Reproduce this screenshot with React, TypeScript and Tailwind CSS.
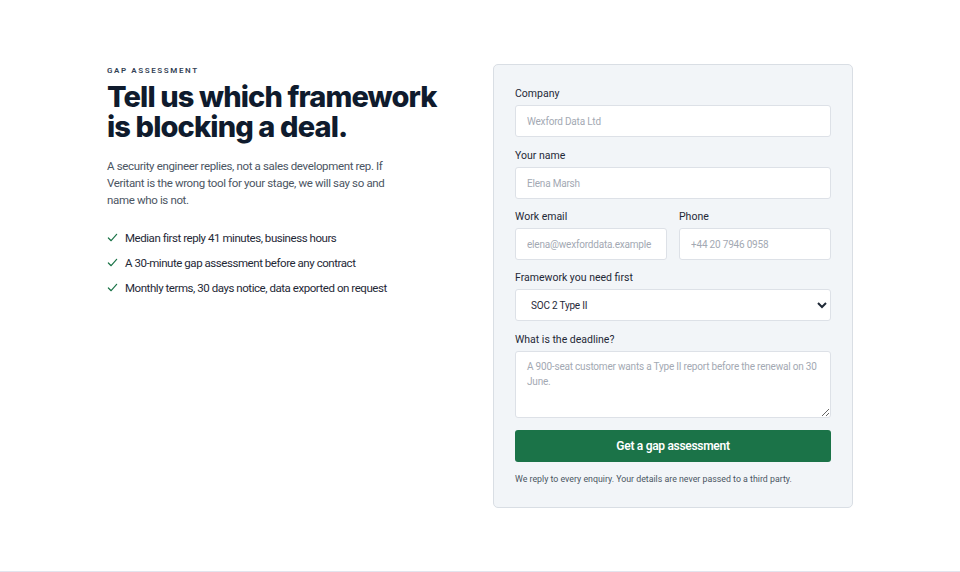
import React from "react";

const body = { fontFamily: 'Roboto, "Noto Sans", sans-serif' };

const points = [
  "Median first reply 41 minutes, business hours",
  "A 30-minute gap assessment before any contract",
  "Monthly terms, 30 days notice, data exported on request",
];

function Check() {
  return (
    <svg viewBox="0 0 12 12" className="mt-[2px] h-[11px] w-[11px] shrink-0 text-[#1b7348]" fill="none" stroke="currentColor" strokeWidth="1.3" strokeLinecap="round" strokeLinejoin="round">
      <path d="M1.5 6.5l3 3 6-7" />
    </svg>
  );
}

function Label({ children }: { children: React.ReactNode }) {
  return <label className="mb-[4px] block text-[10.5px] leading-[14px] text-[#1f2937]">{children}</label>;
}

const field =
  "block w-full h-[32px] rounded-[3px] border border-[#dde1e7] bg-white px-[11px] text-[10px] tracking-[-0.2px] text-[#1f2937] placeholder:text-[#a3a9b3] outline-none";

export default function App() {
  return (
    <div className="h-[572px] w-full overflow-hidden border-b border-[#e3e4ee] bg-white" style={body}>
      <div className="mx-auto flex w-[746px] justify-between pt-[64px]">
        <div className="w-[350px] pt-[2px]">
          <p className="text-[8px] font-semibold uppercase leading-[10px] tracking-[0.2em] text-[#334155]">
            Gap assessment
          </p>
          <h1
            className="mt-[6px] text-[29px] font-extrabold leading-[30px] tracking-[-0.03em] text-[#0f1b2d]"
            style={{ fontFamily: "Inter, sans-serif" }}
          >
            Tell us which framework
            <br />
            is blocking a deal.
          </h1>
          <p className="mt-[16px] w-[290px] text-[11.5px] leading-[17px] tracking-[-0.35px] text-[#4b5563]">
            A security engineer replies, not a sales development rep. If Veritant is the wrong tool for your stage, we will
            say so and name who is not.
          </p>
          <ul className="mt-[21px] flex flex-col gap-[8px]">
            {points.map((p) => (
              <li key={p} className="flex gap-[7px] text-[11.5px] leading-[17px] tracking-[-0.45px] text-[#1f2937]">
                <Check />
                {p}
              </li>
            ))}
          </ul>
        </div>

        <form className="w-[360px] self-start rounded-[5px] border border-[#d9dee4] bg-[#f2f5f8] px-[21px] pt-[22px] pb-[22px]">
          <Label>Company</Label>
          <input className={field} placeholder="Wexford Data Ltd" />
          <div className="mt-[12px]">
            <Label>Your name</Label>
            <input className={field} placeholder="Elena Marsh" />
          </div>
          <div className="mt-[11px] grid grid-cols-2 gap-[12px]">
            <div>
              <Label>Work email</Label>
              <input className={field} placeholder="elena@wexforddata.example" />
            </div>
            <div>
              <Label>Phone</Label>
              <input className={field} placeholder="+44 20 7946 0958" />
            </div>
          </div>
          <div className="mt-[11px]">
            <Label>Framework you need first</Label>
            <select className={field + " appearance-auto"} defaultValue="soc2">
              <option value="soc2">SOC 2 Type II</option>
              <option value="iso">ISO 27001</option>
            </select>
          </div>
          <div className="mt-[12px]">
            <Label>What is the deadline?</Label>
            <textarea
              className="block h-[67px] w-full rounded-[3px] border border-[#dde1e7] bg-white px-[11px] py-[7px] text-[10px] leading-[15px] tracking-[-0.2px] text-[#1f2937] placeholder:text-[#a3a9b3] outline-none"
              placeholder="A 900-seat customer wants a Type II report before the renewal on 30 June."
            />
          </div>
          <button
            type="button"
            className="mt-[12px] h-[32px] w-full rounded-[3px] bg-[#1b7348] text-[12px] font-semibold tracking-[-0.3px] text-white"
          >
            Get a gap assessment
          </button>
          <p className="mt-[11px] text-[8.8px] leading-[12px] text-[#4b5563]">
            We reply to every enquiry. Your details are never passed to a third party.
          </p>
        </form>
      </div>
    </div>
  );
}
